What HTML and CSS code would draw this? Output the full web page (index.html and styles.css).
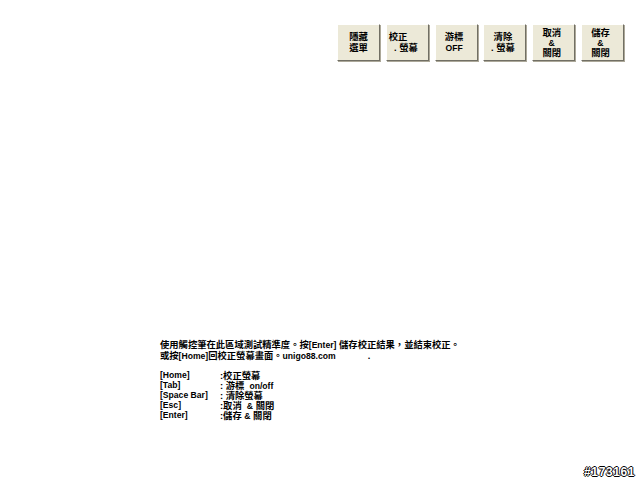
FILE: index.html
```html
<!DOCTYPE html>
<html lang="zh-Hant">
<head>
<meta charset="utf-8">
<title>校正螢幕</title>
<link rel="stylesheet" href="styles.css">
</head>
<body>
<div class="screen">
  <div class="toolbar">
    <div class="btn"><span>隱藏<br>選單</span></div>
    <div class="btn btn-left"><span>校正<br>&nbsp;&nbsp;. 螢幕</span></div>
    <div class="btn btn-shift"><span>游標<br><span class="en">OFF</span></span></div>
    <div class="btn btn-shift"><span>清除<br>. 螢幕</span></div>
    <div class="btn btn-shift btn-three"><span>取消<br><span class="en">&amp;</span><br>關閉</span></div>
    <div class="btn btn-shift btn-three"><span>儲存<br><span class="en">&amp;</span><br>關閉</span></div>
  </div>
  <div class="help">
    <p class="intro">使用觸控筆在此區域測試精準度。按<span class="en">[Enter]</span> 儲存校正結果，並結束校正。<br>或按<span class="en">[Home]</span>回校正螢幕畫面。<span class="en">unigo88.com</span><span class="dot">.</span></p>
    <div class="keys">
      <span class="en">[Home]</span><span>:校正螢幕</span>
      <span class="en">[Tab]</span><span>: 游標&nbsp; <span class="en">on/off</span></span>
      <span class="en">[Space Bar]</span><span>: 清除螢幕</span>
      <span class="en">[Esc]</span><span>:取消&nbsp; <span class="en">&amp;</span> 關閉</span>
      <span class="en">[Enter]</span><span>:儲存 <span class="en">&amp;</span> 關閉</span>
    </div>
  </div>
  <div class="tag">#173161</div>
</div>
</body>
</html>
```
FILE: styles.css
```css
* { box-sizing: border-box; }
html, body { margin: 0; padding: 0; background: #fff; }
.screen {
  position: relative;
  width: 640px;
  height: 480px;
  overflow: hidden;
  font-family: "Liberation Sans", "Noto Sans CJK TC", sans-serif;
  font-size: 9.3px;
  font-weight: bold;
  color: #000;
  display: flex;
  flex-direction: column;
}
.en { font-size: 8.6px; line-height: 1; }
.toolbar {
  display: flex;
  gap: 5.8px;
  margin: 24px 0 0 337px;
}
.btn {
  width: 43px;
  height: 37px;
  background: #ece9d8;
  border: 1px solid;
  border-color: #fff #716f64 #716f64 #fff;
  box-shadow: 1px 1px 0 #aca899;
  display: flex;
  align-items: center;
  justify-content: center;
  text-align: center;
  line-height: 11px;
}
.btn-left { justify-content: flex-start; text-align: left; padding-left: 2px; }
.btn-shift { padding-right: 4px; }
.btn-three { line-height: 10px; }
.help { margin: 279px 0 0 160px; line-height: 11px; }
.intro { margin: 0; white-space: nowrap; }
.dot { margin-left: 32px; }
.keys {
  display: grid;
  grid-template-columns: 60px auto;
  justify-content: start;
  margin-top: 9px;
  line-height: 10px;
}
.tag {
  position: absolute;
  right: 5px;
  top: 465px;
  font-size: 12px;
  letter-spacing: 0.6px;
  color: #fff;
  text-shadow: 1px 0 0 #000, -1px 0 0 #000, 0 1px 0 #000, 0 -1px 0 #000;
}
```
